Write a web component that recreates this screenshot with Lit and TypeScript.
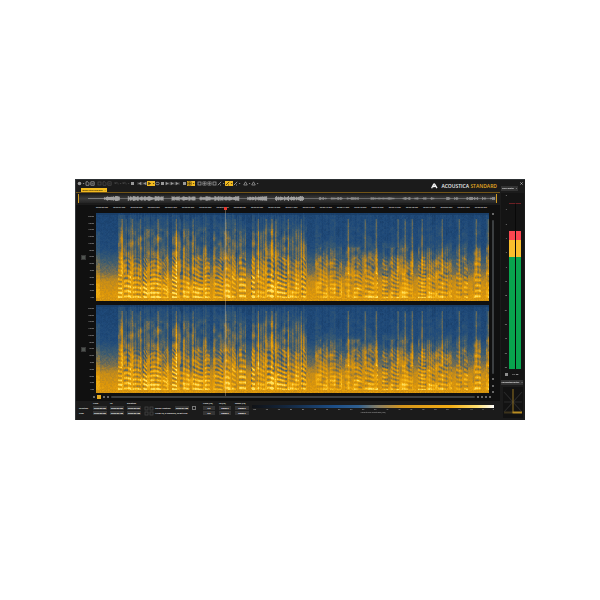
import { LitElement, html, css, svg } from "lit";
import { customElement, property } from "lit/decorators.js";
import { classMap } from "lit/directives/class-map.js";
import { styleMap } from "lit/directives/style-map.js";

const rand = (a: number, b = 0): number => {
  const s = Math.sin(a * 127.1 + b * 311.7 + 17.3) * 43758.5453;
  return s - Math.floor(s);
};

// Smooth noise: random values on a lattice, blended in between.
const soft = (x: number, y: number, salt: number): number => {
  const i = Math.floor(x);
  const j = Math.floor(y);
  const u = x - i;
  const w = y - j;
  const a = rand(i + salt, j) * (1 - u) + rand(i + 1 + salt, j) * u;
  const b = rand(i + salt, j + 1) * (1 - u) + rand(i + 1 + salt, j + 1) * u;
  return a * (1 - w) + b * w;
};

const mix = (stops: number[][], p: number): number[] => {
  if (p <= stops[0][0]) return stops[0].slice(1);
  for (let i = 1; i < stops.length; i++) {
    if (p <= stops[i][0]) {
      const a = stops[i - 1];
      const b = stops[i];
      const k = (p - a[0]) / (b[0] - a[0]);
      return a.slice(1).map((v, n) => v + (b[n + 1] - v) * k);
    }
  }
  return stops[stops.length - 1].slice(1);
};

// Level to colour: blue for quiet, gold for loud, pale yellow at the peaks.
const PALETTE = [
  [0, 25, 62, 104],
  [0.12, 31, 74, 122],
  [0.3, 58, 90, 112],
  [0.45, 112, 108, 84],
  [0.6, 178, 132, 38],
  [0.75, 220, 150, 10],
  [0.9, 246, 180, 20],
  [1.05, 255, 226, 96],
];

const QUIET = [[0, 0.07], [0.4, 0.12], [0.52, 0.28], [0.68, 0.46], [0.78, 0.66], [0.9, 0.73], [1, 0.76]];
const VOICE_A = [[0, 0.1], [0.1, 0.17], [0.22, 0.26], [0.4, 0.34], [0.52, 0.47], [0.68, 0.57], [0.8, 0.74], [1, 0.84]];
const VOICE_B = [[0, 0.1], [0.32, 0.16], [0.46, 0.34], [0.55, 0.45], [0.7, 0.57], [0.82, 0.71], [1, 0.82]];
const PAUSES = [[73, 76], [114, 117], [150, 155], [211, 219], [246, 249], [282, 286], [318, 322], [356, 360], [372, 377], [385, 390]];
const SPIKES = [26, 30, 36, 44, 62, 80, 84, 97, 130, 139, 162, 170, 176, 180, 192, 205, 252, 269, 280, 302, 309, 316, 326, 346, 363, 380, 392];

@customElement("spectrum-view")
export class SpectrumView extends LitElement {
  @property() channel = "L";

  static styles = css`
    :host { display: block; position: relative; height: 88px; }
    canvas { display: block; width: 100%; height: 100%; }
  `;

  firstUpdated() {
    const canvas = this.renderRoot.querySelector("canvas")!;
    const ctx = canvas.getContext("2d")!;
    const W = canvas.width;
    const H = canvas.height;
    const img = ctx.createImageData(W, H);
    let start = 0;
    let len = 6;
    let syl = 0;
    for (let x = 0; x < W; x++) {
      if (x - start >= len) {
        start = x;
        syl++;
        len = 5 + Math.floor(rand(syl, 5) * 10);
      }
      const quiet = x < 22;
      const pause = PAUSES.some(([a, b]) => x >= a && x < b);
      const late = x > 213;
      const spike = SPIKES.includes(x) ? 1 : SPIKES.includes(x + 1) ? 0.6 : 0;
      const fine = rand(x, 9);
      const wide = rand(Math.floor(x / 3), 31);
      const u = (x - start) / len;
      const pitch = 3.8 + rand(syl, 3) * 1.4 + Math.sin(u * 3.1 + rand(syl, 8) * 2) * 0.4;
      const gate = u < 0.2 ? 0.1 : 0.5 + rand(syl, 12) * 0.8;
      for (let y = 0; y < H; y++) {
        const t = y / (H - 1);
        const profile = quiet || pause ? QUIET : late ? VOICE_B : VOICE_A;
        let v = mix(profile, t)[0];
        v += (rand(x, y + 3) - 0.5) * 0.07 + (rand(Math.floor(x / 2), Math.floor(y / 2) + 200) - 0.5) * 0.06;
        if (quiet) {
          if (x < 4 && t > 0.2) v += 0.1;
        } else if (!pause) {
          const mid = late ? (t > 0.4 ? 0.26 : 0.08) : t > 0.2 ? 0.32 : 0.18;
          v += (fine * 0.55 + wide * 0.45 - 0.48) * mid * (t > 0.75 ? 0.6 : 1) * 1.3;
          v += (soft(x / 3.5, y / 5, 400) - 0.5) * (t > 0.18 ? (late && t < 0.38 ? 0.14 : 0.3) : 0.08);
          if (t > 0.06) v += spike * (late ? 0.26 : 0.2) * (t > 0.7 ? 0.3 : 1);
          if (t > 0.5) {
            const depth = t > 0.7 ? 0.19 : 0.1;
            v += Math.cos(((H - y) / pitch) * Math.PI * 2) * depth * gate * (late ? 0.7 : 1);
          }
        } else if (t > 0.06) {
          v += spike * 0.15;
        }
        if (y < 2) v -= 0.12;
        if (y > H - 4) v = 0.74 + (rand(x, y) - 0.5) * 0.12;
        const c = mix(PALETTE, v);
        const o = (y * W + x) * 4;
        img.data[o] = c[0];
        img.data[o + 1] = c[1];
        img.data[o + 2] = c[2];
        img.data[o + 3] = 255;
      }
    }
    ctx.putImageData(img, 0, 0);
  }

  render() {
    return html`<canvas width="393" height="88" role="img" aria-label="Spectrogram ${this.channel}"></canvas>`;
  }
}

@customElement("wave-overview")
export class WaveOverview extends LitElement {
  static styles = css`
    :host { display: block; height: 9px; }
    canvas { display: block; width: 100%; height: 100%; }
  `;

  firstUpdated() {
    const canvas = this.renderRoot.querySelector("canvas")!;
    const ctx = canvas.getContext("2d")!;
    ctx.fillStyle = "#7c7c7c";
    ctx.fillRect(8, 4, 409, 1);
    for (let x = 24; x < 417; x++) {
      const loud = x < 225;
      const syl = rand(Math.floor(x / 4), 77);
      const gap = syl < (loud ? 0.26 : 0.4);
      const peak = gap ? 0.5 : (loud ? 0.9 : 0.5) + rand(x, 4) * (loud ? 1.6 : 1.1);
      ctx.fillStyle = gap ? "#6a6a6a" : loud ? "#a2a2a2" : "#8a8a8a";
      ctx.fillRect(x, 4.5 - peak, 1, peak * 2);
    }
  }

  render() {
    return html`<canvas width="417" height="9" role="img" aria-label="Overview"></canvas>`;
  }
}

type Tool = { n: string; i?: string; menu?: boolean; on?: boolean; dim?: boolean };

const ICONS: Record<string, unknown> = {
  disc: svg`<circle cx="2.5" cy="2.5" r="1.8" fill="currentColor"/>`,
  file: svg`<path d="M1 .8h2l1 1v2.500H1z" fill="none" stroke="currentColor" stroke-width=".8"/>`,
  save: svg`<path d="M.8.8h3.400v3.500H.8zM1.500 2.800h2" fill="none" stroke="currentColor" stroke-width=".8"/>`,
  box: svg`<rect x="1" y="1" width="3" height="3" fill="none" stroke="currentColor" stroke-width=".8"/>`,
  undo: svg`<path d="M1 1v1.500h1.500M1 2.500C2 .8 4 1 4.200 3.500" fill="none" stroke="currentColor" stroke-width=".7"/>`,
  rec: svg`<rect x="1" y="1" width="3" height="3" fill="currentColor"/>`,
  prev: svg`<path d="M1 1v3M4.200 1 1.500 2.500 4.200 4z" fill="currentColor" stroke="currentColor" stroke-width=".4"/>`,
  next: svg`<path d="M4 1v3M.8 1 3.500 2.500.8 4z" fill="currentColor" stroke="currentColor" stroke-width=".4"/>`,
  play: svg`<path d="M1.200.7 4.200 2.500 1.200 4.300z" fill="currentColor"/>`,
  loop: svg`<rect x=".8" y="1.300" width="3.400" height="2.400" rx="1" fill="none" stroke="currentColor" stroke-width=".8"/>`,
  grid: svg`<path d="M.8.8h3.400v3.400H.8zM2.500.8v3.400M.8 2.500h3.400" fill="none" stroke="currentColor" stroke-width=".6"/>`,
  pen: svg`<path d="M.8 4.200 4.200.8M3 4h1" stroke="currentColor" stroke-width=".9"/>`,
  mark: svg`<path d="M2.500.8 4.300 4H.7z" fill="none" stroke="currentColor" stroke-width=".8"/>`,
};

const TOOLS: (Tool | null)[] = [
  { n: "New", i: "disc", menu: true }, { n: "Open", i: "file" }, { n: "Save", i: "save" }, null,
  { n: "Cut", i: "box", dim: true }, { n: "Copy", i: "file", dim: true }, { n: "Paste", i: "save", dim: true }, null,
  { n: "Undo", i: "undo", menu: true, dim: true }, { n: "Redo", i: "undo", menu: true, dim: true },
  { n: "Stop", i: "rec" }, null,
  { n: "Start", i: "prev" }, { n: "Rewind", i: "prev" }, { n: "Play", i: "play", menu: true, on: true },
  { n: "Loop", i: "loop" }, { n: "Record", i: "rec" }, { n: "Forward", i: "next" }, { n: "End", i: "next" }, { n: "Next marker", i: "next" }, null,
  { n: "Waveform", i: "rec" }, { n: "Spectrogram", i: "grid", menu: true, on: true }, null,
  { n: "Time range", i: "box" }, { n: "Region", i: "grid" }, { n: "Frequency", i: "grid" }, { n: "Lasso", i: "box" },
  { n: "Brush", i: "pen", menu: true }, { n: "Pencil", i: "pen", menu: true, on: true }, { n: "Eraser", i: "pen", menu: true }, null,
  { n: "Marker", i: "mark", menu: true }, { n: "Snap", i: "mark", menu: true },
];

const HZ = ["20000", "18000", "16000", "12000", "10000", "8000", "6000", "5000", "4000", "3000", "2000", "1000", "500"];

@customElement("app-root")
export class AppRoot extends LitElement {
  static styles = css`
    * { box-sizing: border-box; }
    :host {
      display: flex; align-items: center; justify-content: center;
      min-height: 100vh; padding-bottom: 1px; box-sizing: border-box;
      background: #fff; color: #c8c8c8;
      font: 700 2px/3px "Open Sans", "Noto Sans", sans-serif;
    }
    button, input { font: inherit; color: inherit; border: 0; padding: 0; margin: 0; background: none; min-width: 0; }
    button { display: flex; align-items: center; justify-content: center; }
    svg { display: block; flex: none; }
    .window {
      display: grid; grid-template-columns: 1fr 25px; width: 75%;
      background: #1b1b1b; border-top: 1px solid #2c3033; border-left: 1px solid #33373a;
    }
    .main { display: flex; flex-direction: column; min-width: 0; }
    .top { display: flex; align-items: flex-start; justify-content: space-between; height: 8px; padding-left: 1px; }
    .tools { display: flex; padding-top: 1px; }
    .tool { width: 5px; height: 5px; color: #999; }
    .tool.menu { width: 8px; }
    .tool.dim { color: #484848; }
    .tool.on { background: #f2bb22; color: #4a390a; }
    .sep { width: 2px; }
    .brand {
      display: flex; align-items: center; gap: 3px; height: 11px; padding-right: 3px;
      font: 600 5px/6px "Open Sans", sans-serif; color: #f0f0f0; white-space: nowrap;
    }
    .brand b { font-weight: 600; color: #e5ab22; }
    .tabs { display: flex; height: 5px; padding-left: 5px; border-bottom: 1px solid #715417; }
    .tab { width: 26px; background: #f3bb1f; color: #3a2a02; gap: 2px; white-space: nowrap; }
    .overview { margin: 1px 3px 0 2px; padding: 0 1px; background: linear-gradient(#1d1d1d, #3b3b3b 50%, #242424); border: solid #d09a20; border-width: 0 1px; }
    .editor { margin-top: 2px; background: #101010; }
    .times { display: flex; height: 8px; padding: 1px 0 0 20px; margin-right: 8px; overflow: hidden; color: #d0d0d0; justify-content: space-between; }
    .times span { width: 17px; flex: none; white-space: nowrap; }
    .lanes { display: grid; grid-template-columns: 20px 1fr 11px; row-gap: 4px; position: relative; }
    .gutter { display: grid; grid-template-columns: 11px 9px; align-items: center; }
    .chan { width: 5px; height: 5px; margin-left: 5px; background: #4f5450; border: 1px solid #383838; }
    .axis { display: flex; flex-direction: column; justify-content: space-around; height: 88px; color: #989898; text-align: right; padding-right: 2px; }
    .vscroll { grid-column: 3; grid-row: 1 / 3; display: flex; flex-direction: column; justify-content: space-between; align-items: center; width: 5px; margin-left: 1px; }
    .thumb { width: 2px; height: 154px; background: #3c3f41; border-radius: 1px; }
    .knob { width: 2px; height: 2px; background: #686868; }
    .cursor { position: absolute; left: 35%; top: -6px; bottom: 0; width: 3px; }
    .cursor::before { content: ""; display: block; height: 3px; background: #e8382e; }
    .cursor::after { content: ""; display: block; height: 100%; width: 1px; margin: 0 auto; background: rgba(255, 225, 180, .3); }
    .hscroll { display: flex; align-items: center; gap: 2px; height: 8px; padding: 0 9px 0 17px; }
    .sel { width: 4px; height: 4px; background: #e5ab22; }
    .bar { flex: 1; height: 2px; background: #3b3e40; border-radius: 1px; }
    .foot { display: flex; height: 19px; padding: 1px 6px 0 3px; white-space: nowrap; }
    .fields { display: grid; grid-template-columns: 11px 14px 14px 14px; grid-template-rows: 3px 4px 4px; column-gap: 3px; row-gap: 1px; align-items: center; color: #e4e4e4; }
    .field { width: 100%; height: 4px; background: #343434; text-align: center; color: #fff; }
    .info { display: grid; grid-template-columns: 8px 17px 14px 5px; grid-template-rows: 3px 4px 4px; gap: 1px 3px; align-items: center; margin-left: 3px; color: #e4e4e4; }
    .info .wide { grid-column: 2 / 5; }
    .info .blank { grid-column: 1 / 5; }
    .info .tick { appearance: none; width: 4px; height: 4px; border: 1px solid #777; }
    .links { color: #444; justify-content: space-around; }
    .freqs { display: grid; grid-template-columns: 12px 12px 14px; grid-template-rows: 3px 4px 4px; gap: 1px 4px; margin-left: 6px; color: #e4e4e4; }
    .legend { flex: 1; margin: 3px 0 0 3px; text-align: center; color: #8c8c8c; }
    .ramp { height: 3px; background: linear-gradient(90deg, #101216, #14263d 14%, #1d4e86 34%, #2f5f8f 44%, #8a8065 52%, #d4951c 62%, #f3ae15 82%, #ffdf70 93%, #fff); }
    .steps { display: flex; justify-content: space-between; }
    .side { display: flex; flex-direction: column; padding: 1px 1px 2px; }
    .close { align-self: flex-end; width: 5px; height: 5px; }
    .head { height: 5px; width: 17px; gap: 2px; background: #333; color: #e8e8e8; white-space: nowrap; }
    .head.long { width: 22px; }
    .meter { display: grid; grid-template-columns: 8px 12px; grid-template-rows: 175px 8px; row-gap: 1px; height: 187px; margin-top: 2px; padding: 1px 0; background: #141414; }
    .marks { display: flex; flex-direction: column; justify-content: space-between; text-align: right; padding-right: 2px; color: #999; }
    .levels { display: grid; grid-template-columns: 1fr 1fr; padding-top: 9px; }
    .level { border-top: 1px solid #6b2024; display: flex; flex-direction: column; justify-content: flex-end; }
    .level + .level { border-left: 1px solid rgba(0, 0, 0, .6); }
    .seg.red { background: #fa4650; }
    .seg.amber { background: #fabe2c; }
    .seg.green { background: #08a44e; }
    .mute { width: 3px; height: 3px; background: #8c8c8c; margin: 3px 0 0 4px; }
    .db { text-align: center; padding-top: 3px; }
    .corr { margin: 2px 1px 0 2px; height: 31px; background: #121212; }
    .corr svg { width: 100%; height: 100%; }
  `;

  private icon(name: string, menu = false) {
    return html`<svg width=${menu ? 8 : 5} height="5" viewBox="0 0 ${menu ? 8 : 5} 5" aria-hidden="true">
      ${ICONS[name]}${menu ? svg`<path d="M5.700 2h1.800l-.9 1.200z" fill="currentColor"/>` : ""}
    </svg>`;
  }

  private tool(t: Tool | null) {
    if (!t) return html`<span class="sep"></span>`;
    const cls = classMap({ tool: true, menu: !!t.menu, on: !!t.on, dim: !!t.dim });
    return html`<button class=${cls} aria-label=${t.n}>${this.icon(t.i!, t.menu)}</button>`;
  }

  private field(label: string, value: string) {
    return html`<input class="field" aria-label=${label} .value=${value} />`;
  }

  private gutter(ch: string) {
    return html`<div class="gutter">
      <button class="chan" aria-label="Channel ${ch}"></button>
      <div class="axis">${HZ.map((h) => html`<span>${h}</span>`)}</div>
    </div>`;
  }

  private level() {
    const parts: [string, number][] = [["red", 9], ["amber", 17], ["green", 112]];
    return html`<div class="level">
      ${parts.map(([c, h]) => html`<div class="seg ${c}" style=${styleMap({ height: `${h}px` })}></div>`)}
    </div>`;
  }

  render() {
    const times = Array.from({ length: 23 }, (_, i) => `00:00:${String(i).padStart(2, "0")}.000`);
    return html`<div class="window">
      <main class="main">
        <header class="top">
          <div class="tools">${TOOLS.map((t) => this.tool(t))}</div>
          <div class="brand">
            <svg width="7" height="6" viewBox="0 0 7 6" aria-hidden="true"><path d="M.6 5.200 2.600 1.400Q3.200.5 3.800 1.400L6 5.200M2.200 4Q3.400 2.800 4.600 3.600" fill="none" stroke="#f5f5f5" stroke-width="1.300"/></svg>
            <span>ACOUSTICA <b>STANDARD</b></span>
          </div>
        </header>
        <nav class="tabs"><button class="tab"><span>Many Interview.wav</span><span>×</span></button></nav>
        <wave-overview class="overview"></wave-overview>
        <section class="editor">
          <div class="times">${times.map((t) => html`<span>${t}</span>`)}</div>
          <div class="lanes">
            ${this.gutter("L")}
            <spectrum-view channel="L"></spectrum-view>
            <div class="vscroll"><span class="knob"></span><span class="thumb"></span><span class="knob"></span><span class="knob"></span><span class="knob"></span></div>
            ${this.gutter("R")}
            <spectrum-view channel="R"></spectrum-view>
            <span class="cursor"></span>
          </div>
          <div class="hscroll">
            <span class="knob"></span><button class="sel" aria-label="Select"></button><span class="knob"></span><span class="knob"></span>
            <span class="bar"></span><span class="knob"></span><span class="knob"></span><span class="knob"></span><span class="knob"></span>
          </div>
        </section>
        <footer class="foot">
          <div class="fields">
            <span></span><span>From</span><span>To</span><span>Duration</span>
            <span>Selection</span>${this.field("Selection from", "00:00:00.000")}${this.field("Selection to", "00:00:00.000")}${this.field("Selection duration", "00:00:00.000")}
            <span>View</span>${this.field("View from", "00:00:00.000")}${this.field("View to", "00:00:22.728")}${this.field("View duration", "00:00:22.728")}
          </div>
          <div class="info">
            <span class="blank"></span>
            <button class="links" aria-label="Zoom to selection">${this.icon("box")}${this.icon("box")}</button>
            <label for="pos">Cursor Position:</label>
            <input class="field" id="pos" .value=${"00:00:07.728"} />
            <input class="tick" type="checkbox" aria-label="Follow cursor" />
            <button class="links" aria-label="Zoom to view">${this.icon("box")}${this.icon("box")}</button>
            <span class="wide">44100 Hz, 2 Channels, 32-Bit PCM</span>
          </div>
          <div class="freqs">
            <span>From (Hz)</span><span>To (Hz)</span><span>Range (Hz)</span>
            ${this.field("Selection from Hz", "0.0")}${this.field("Selection to Hz", "22050.0")}${this.field("Selection range Hz", "22050.0")}
            ${this.field("View from Hz", "0.0")}${this.field("View to Hz", "22050.0")}${this.field("View range Hz", "22050.0")}
          </div>
          <div class="legend">
            <div class="ramp"></div>
            <div class="steps">${Array.from({ length: 21 }, (_, i) => html`<span>${i * 5 - 100}</span>`)}</div>
            <div>Amplitude Spectrum (dB)</div>
          </div>
        </footer>
      </main>
      <aside class="side">
        <button class="close" aria-label="Close"><svg width="3" height="3" viewBox="0 0 3 3"><path d="M.4.4l2.200 2.200M2.600.4.4 2.600" stroke="#bbb" stroke-width=".8"/></svg></button>
        <button class="head"><span>Level Meter</span><span>×</span></button>
        <div class="meter">
          <div class="marks">${["6", "3", "0", "-3", "-6", "-9", "-12", "-18", "-24", "-30", "-40", "-50", "-60"].map((m) => html`<span>${m}</span>`)}</div>
          <div class="levels">${this.level()}${this.level()}</div>
          <button class="mute" aria-label="Reset peaks"></button>
          <span class="db">-9.1 dB</span>
        </div>
        <button class="head long"><span>Correlation Meter</span><span>×</span></button>
        <div class="corr">
          <svg viewBox="0 0 19 31" preserveAspectRatio="none" role="img" aria-label="Correlation">
            <path d="M1 5l17 20M18 5 1 25M1 15h17" stroke="#2b2b2b" stroke-width="1" fill="none"/>
            <path d="M9.500 2v24" stroke="#8d6e22" stroke-width="1"/>
            <path d="M1 25.500h8" stroke="#3c331c" stroke-width="2"/>
            <path d="M9 25.500h9" stroke="#b98d22" stroke-width="2"/>
          </svg>
        </div>
      </aside>
    </div>`;
  }
}
